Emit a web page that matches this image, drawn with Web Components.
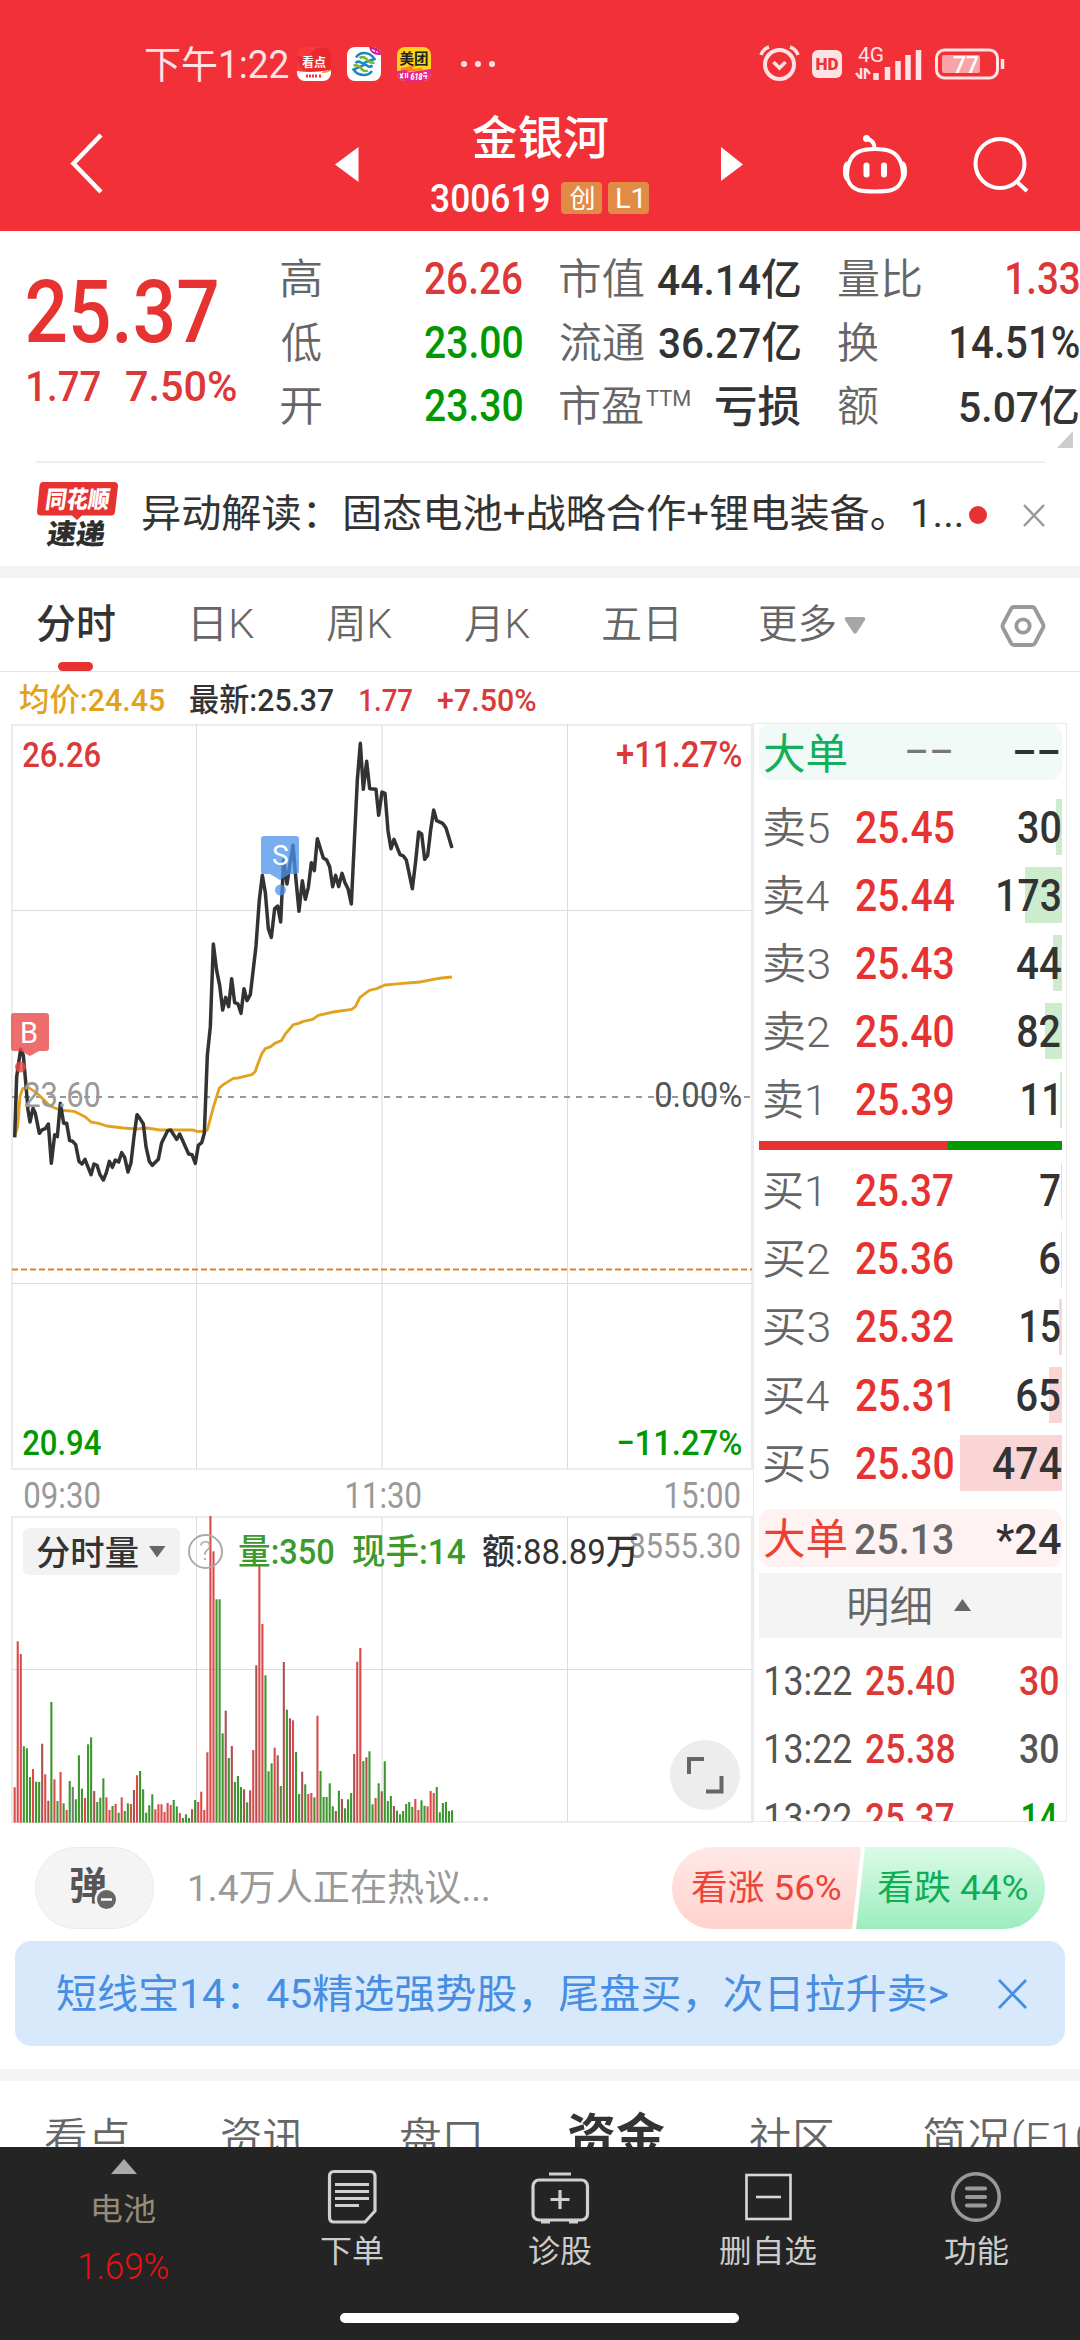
<!DOCTYPE html>
<html lang="zh-CN">
<head>
<meta charset="utf-8">
<title>金银河 300619</title>
<style>
html,body{margin:0;padding:0;width:1080px;height:2340px;overflow:hidden;background:#fff}
body{font-family:Roboto,"Noto Sans CJK SC",sans-serif;color:#333}
</style>
</head>
<body>
<stock-page></stock-page>
<script>
const FAMILY = 'Roboto, "Noto Sans CJK SC", sans-serif';
const pen = document.createElement('canvas').getContext('2d');

/* A single line of text whose ink is fitted to the width given in w. */
class UiText extends HTMLElement {
  connectedCallback() {
    const s = +this.getAttribute('size'), wt = this.getAttribute('weight') || 400;
    const text = this.getAttribute('text'), w = +this.getAttribute('w'), c = this.getAttribute('color') || 'inherit';
    pen.font = `${wt} ${s}px ${FAMILY}`;
    const m = pen.measureText(text), l = -m.actualBoundingBoxLeft, r = m.actualBoundingBoxRight;
    const k = w / (r - l);
    const lh = Math.round(s * 1.3), pull = (s - lh) / 2;
    this.attachShadow({mode: 'open'}).innerHTML = `<style>
      :host{display:block;flex:none;width:${w}px;height:${s}px}
      span{display:inline-block;vertical-align:top;margin-top:${pull}px;white-space:pre;font:${wt} ${s}px/${lh}px ${FAMILY};color:${c};
        transform-origin:0 50%;transform:translate(${-l * k}px,1.4px) scaleX(${k})}
    </style><span></span>`;
    this.shadowRoot.querySelector('span').textContent = text;
  }
}
customElements.define('ui-text', UiText);

const T = (text, w, size, color = '#333', weight = 400, ml = 0, dy = 0) =>
  `<ui-text text="${text}" w="${w}" size="${size}" color="${color}" weight="${weight}" style="margin-left:${ml}px;margin-top:${dy}px"></ui-text>`;
/* items: [left, width, text, size, color, weight]; laid out left to right in a flex row */
const run = (items, from = 0) => {
  let at = from;
  return items.map(([x, w, t, s, c, wt, dy]) => { const h = T(t, w, s, c, wt, x - at, dy); at = x + w; return h; }).join('');
};
const define = (name, css, html) => customElements.define(name, class extends HTMLElement {
  connectedCallback() {
    this.attachShadow({mode: 'open'}).innerHTML = `<style>:host{display:block}*{box-sizing:border-box}svg{display:block;flex:none;overflow:visible}.r{display:flex;align-items:center}${css}</style>${typeof html === 'function' ? html(this) : html}`;
  }
});

define('status-bar', `:host{height:128px;padding-left:146px;color:#fff}.r{height:128px}`, `<div class="r">
  ${T('下午1:22', 142, 38, '#fde3e4', 400)}
  <svg width="200" height="34" viewBox="297 47 200 34" style="margin-left:9px">
    <defs><clipPath id="a"><rect x="297" y="47" width="34" height="34" rx="8"/></clipPath><clipPath id="b"><rect x="347" y="47" width="34" height="34" rx="8"/></clipPath><clipPath id="c"><rect x="397" y="47" width="34" height="34" rx="8"/></clipPath></defs>
    <g clip-path="url(#a)"><rect x="297" y="47" width="34" height="34" fill="#f8383a"/><path d="M297 55Q306 62 316 48L331 47V72H310Q297 68 297 55Z" fill="#e9292d"/><path d="M297 71Q310 73.500 331 70V81H297Z" fill="#fff"/><path d="M322 72.500Q328 72 331 70" stroke="#f7a23b" stroke-width="1.500"/><path d="M306 76h12M319 76h3" stroke="#e33" stroke-width="2.800" stroke-dasharray="2 1"/></g>
    <text x="302" y="66.500" font-size="12" font-weight="700" fill="#fff" textLength="24" font-family='"Noto Sans CJK SC"'>看点</text>
    <g clip-path="url(#b)"><rect x="347" y="47" width="34" height="34" fill="#fff"/><path d="M369 47h12v8q-10 1-12-8z" fill="#c9208f"/><path d="M372 49.500l3 2M376 51.500l2 1" stroke="#fff" stroke-width="1.200"/>
      <g fill="none" stroke-width="2.500"><path d="M356 57.500Q359 53 364 53Q371 53 374.500 59L366 62Q363 64 361 62.500Q358 60.500 355.500 63" stroke="#1d86c6"/><path d="M372 71Q369 75 364 75Q357 75 353.500 69.500L362 66Q365 64 367 65.500Q370 68 372.500 65.500" stroke="#1d86c6"/><path d="M353.500 65.500Q358 64 362 69.500Q365 72 368 70.500" stroke="#79b82a"/><path d="M374.500 62.500Q370 64 366 58.500Q363 56 359.500 58" stroke="#79b82a"/></g></g>
    <g clip-path="url(#c)"><rect x="397" y="47" width="34" height="34" fill="#ffd51c"/><path d="M397 71L411 69L407 72.500L431 69V81H397Z" fill="#e8288c"/><path d="M401 69.500L413 66.500L409 70.500L422 69" stroke="#ff7d1a" stroke-width="2" fill="none"/><path d="M400 73.500l3 5M403 73l-3 5.500M405.500 73v5M407.500 73v5M423.500 73h3.500M423 76h4.500M426 76v3" stroke="#fff" stroke-width="1.300"/></g>
    <text x="399.500" y="64" font-size="14.500" font-weight="700" fill="#222" textLength="29" font-family='"Noto Sans CJK SC"'>美团</text>
    <text x="410.500" y="80" font-size="9" font-weight="900" font-style="italic" fill="#fff" textLength="12" lengthAdjust="spacingAndGlyphs" font-family="Roboto">618</text>
    <g fill="#fde3e4"><circle cx="464" cy="64" r="3"/><circle cx="478" cy="64" r="3"/><circle cx="492" cy="64" r="3"/></g>
  </svg>
  <svg width="250" height="40" viewBox="758 44 250 40" style="margin-left:261px" fill="none" stroke="#fde3e4">
    <circle cx="779.500" cy="64.500" r="14.500" stroke-width="4"/><path d="M773.500 62l6 6 6-6" stroke-width="3.500"/><path d="M761 55q2-6 8-8M798 55q-2-6-8-8" stroke-width="3.500"/>
    <rect x="812" y="50" width="30" height="28" rx="6" fill="#fde3e4" stroke="none"/><text x="815.500" y="70" font-size="16" font-weight="900" textLength="23" lengthAdjust="spacingAndGlyphs" font-family="Roboto" fill="#f13038" stroke="none">HD</text>
    <text x="858" y="62" font-size="20" textLength="26" lengthAdjust="spacingAndGlyphs" font-family="Roboto" fill="#fde3e4" stroke="none">4G</text>
    <path d="M861 68v11M856 73l4 5M865 79v-11M870 74l-4-5" stroke-width="2.500"/>
    <path d="M876 73v7M887.500 67v13M898 61v19M908 55v25M918.500 50v30" stroke-width="5.500"/>
    <rect x="936.500" y="50" width="61" height="28" rx="8" stroke-width="3"/><path d="M1002.500 59v10" stroke-width="3.500"/>
    <rect x="942" y="55" width="38" height="18" rx="2" fill="#f9a3a6" stroke="none"/><text x="953" y="73" font-size="24" font-weight="500" textLength="26" lengthAdjust="spacingAndGlyphs" font-family="Roboto" fill="#fff" stroke="none">77</text>
  </svg></div>`);

define('title-bar', `:host{height:103px;display:flex;align-items:flex-start;color:#fff}
.mid{width:250px;display:flex;flex-direction:column;align-items:center}
.code{display:flex;align-items:center;height:32px}
.b{width:41px;height:32px;background:#e28b47;border-radius:4px;display:flex;align-items:center;justify-content:center}`, `
  <svg width="360" height="80" viewBox="0 128 360 80"><path d="M101 135L73.500 163.500L101 192" fill="none" stroke="#fff" stroke-width="4.500"/><path d="M335 164.500L358.500 147V182Z" fill="#fff"/></svg>
  <div class="mid" style="margin-left:55px">
    ${T('金银河', 135, 46, '#fff', 500, 0, -14)}
    <div class="code" style="margin-top:22px">${T('300619', 118, 38, '#fff', 500)}<div class="b" style="margin-left:12px">${T('创', 24, 26, '#fff')}</div><div class="b" style="margin-left:6px">${T('L1', 24, 28, '#fff')}</div></div>
  </div>
  <svg width="360" height="80" viewBox="720 128 360 80" style="margin-left:55px" fill="none" stroke="#fff" stroke-width="4"><path d="M721 147V181L743 164.500Z" fill="#fff" stroke="none"/>
    <path d="M875 149c14 0 22 3 26 14 5 16-1 24-9 27-8 2-26 2-34 0-8-3-14-11-9-27 4-11 12-14 26-14z"/><path d="M848 163q-3 1-3 8t3 9M902 163q3 1 3 8t-3 9"/><path d="M874.500 148q0-7-7-9" /><circle cx="866.500" cy="138.500" r="3.500" fill="#fff" stroke="none"/><path d="M866.500 165.500v9M884 165.500v9" stroke-width="6" stroke-linecap="round"/>
    <circle cx="1000" cy="163.500" r="24.500"/><path d="M1017 182l10 9"/></svg>`);

define('quote-panel', `:host{height:230px;display:flex;overflow:hidden}.left{width:281px;padding-top:43px}.g{width:799px;padding-top:16px}.g .r{height:63.500px}`, `
  <div class="left"><div class="r" style="height:74px">${T('25.37', 190, 88, '#e63231', 500, 27)}</div><div class="r" style="height:74px">${run([[28, 72, '1.77', 43, '#dc3838', 500], [126, 110, '7.50%', 43, '#dc3838', 500]])}</div></div>
  <div class="g">
    <div class="r">${run([[281,40,'高',42,'#666',350],[425,97,'26.26',44,'#dc3838',500],[560,84,'市值',42,'#666',350],[658,142,'44.14亿',43,'#333',500],[838,83,'量比',42,'#666',350],[1007,72,'1.33',44,'#dc3838',500]],281)}</div>
    <div class="r">${run([[281,40,'低',42,'#666',350],[425,97,'23.00',44,'#009900',500],[560,84,'流通',42,'#666',350],[659,141,'36.27亿',43,'#333',500],[838,40,'换',42,'#666',350],[951,128,'14.51%',44,'#333',500]],281)}</div>
    <div class="r">${run([[281,40,'开',42,'#666',350],[425,97,'23.30',44,'#009900',500],[560,83,'市盈',42,'#666',350],[646,44,'TTM',22,'#666',400,-16],[716,84,'亏损',43,'#333',500],[838,40,'额',42,'#666',350],[960,118,'5.07亿',43,'#333',500]],281)}</div>
    <svg width="16" height="17" style="margin:-7px 0 0 776px"><path d="M16 0V17H0Z" fill="#ccc"/></svg>
  </div>`);

define('news-strip', `:host{height:105px;margin:0 35px 0 36px;border-top:2px solid #eee;display:flex;align-items:center}`, `
  <svg width="84" height="70" viewBox="35 478 84 70"><path d="M42 480H113Q117 480 117 484L114 510Q113.500 513.500 110 513.500H81L76 518L71 513.500H40Q36 513.500 36 510L38.500 484Q39 480 42 480Z" fill="#e63231"/>
  <g font-family='"Noto Sans CJK SC"' font-weight="900"><text transform="translate(43.500 506) skewX(-8)" font-size="24" fill="#fff" textLength="64" lengthAdjust="spacingAndGlyphs">同花顺</text><text transform="translate(45 542) skewX(-8)" font-size="28" fill="#2e2e2e" textLength="58" lengthAdjust="spacingAndGlyphs">速递</text></g></svg>
  ${T('异动解读：固态电池+战略合作+锂电装备。1...', 819, 39, '#333', 400, 23, -2)}
  <svg width="80" height="30" viewBox="967 498 80 30" style="margin-left:5px"><circle cx="978" cy="513" r="9" fill="#e63231"/><path d="M1024 503L1044 524M1044 503L1024 524" stroke="#999" stroke-width="2.500"/></svg>`);

define('period-tabs', `:host{height:94px;border-bottom:1px solid #e4e4e4}.r{height:92px}.i{width:35px;height:9px;border-radius:5px;background:#e63231;margin:-8px 0 0 58px}`, `
  <div class="r">${run([[37,78,'分时',40,'#333',500],[194,60,'日K',40,'#666',350],[327,65,'周K',40,'#666',350],[465,65,'月K',40,'#666',350],[603,74,'五日',40,'#666',350],[759,76,'更多',40,'#666',350]])}
  <svg width="205" height="50" viewBox="843 599 205 50" style="margin-left:8px;margin-top:1px"><path d="M846 616H864Q866 617 865 619L856.500 632Q855 633.500 853.500 632L845 619Q844 617 846 616Z" fill="#a6a6a6"/><g fill="none" stroke="#999" stroke-width="3.800"><path d="M1014 606H1032Q1034 606 1035 608L1043 623Q1044 625 1043 627L1035 642Q1034 644 1032 644H1014Q1012 644 1011 642L1003 627Q1002 625 1003 623L1011 608Q1012 606 1014 606Z" stroke-linejoin="round"/><circle cx="1023" cy="625" r="6.700"/></g></svg></div><div class="i"></div>`);

define('chart-legend', `:host{height:51px}.r{height:54px}`, `<div class="r">${run([[20,144,'均价:24.45',32,'#e2a21c',500],[190,143,'最新:25.37',32,'#333',500],[360,52,'1.77',32,'#d93a3a',500],[438,98,'+7.50%',32,'#d93a3a',500]])}</div>`);

/* Price polyline, average polyline and volume bars, in thirds of a pixel. */
const PRICE = '44,1312 50,1130 62,1048 70,1066 80,1180 84,1230 90,1266 99,1225 106,1240 118,1300 126,1290 136,1286 145,1272 154,1390 164,1304 172,1310 181,1210 191,1270 200,1270 209,1322 218,1324 227,1334 237,1384 246,1392 255,1378 273,1424 282,1392 291,1396 300,1424 310,1440 319,1418 328,1384 337,1402 346,1380 356,1386 365,1358 374,1372 384,1416 393,1388 402,1310 411,1244 420,1256 430,1272 438,1340 448,1384 457,1396 475,1378 485,1328 503,1292 512,1290 530,1318 539,1302 566,1362 576,1364 586,1390 595,1336 605,1328 613,1300 622,1066 631,980 640,732 650,812 659,856 668,930 677,892 686,920 695,836 704,908 714,912 723,940 732,866 741,902 751,884 768,738 778,600 787,526 796,578 805,686 814,712 824,626 833,618 842,666 851,480 861,552 870,490 879,436 888,540 897,634 907,542 916,598 925,562 934,488 943,512 952,416 970,474 980,480 989,500 998,560 1007,526 1016,560 1026,520 1035,548 1044,566 1054,612 1072,240 1081,130 1090,268 1100,184 1109,266 1128,268 1136,346 1146,276 1155,280 1164,392 1173,446 1182,418 1200,464 1210,468 1219,480 1237,566 1247,484 1256,396 1265,402 1274,478 1283,466 1292,390 1301,330 1310,362 1328,370 1338,384 1356,444';
const AVG = '44,1310 53,1280 60,1190 68,1166 84,1162 100,1172 120,1188 150,1218 180,1230 222,1234 255,1250 273,1266 296,1270 320,1278 370,1284 410,1287 440,1284 480,1290 580,1290 590,1294 615,1294 622,1290 640,1222 658,1164 670,1154 700,1135 715,1134 755,1124 765,1116 776,1085 786,1060 796,1046 812,1040 824,1030 844,1022 856,1002 880,974 896,970 910,964 938,958 955,946 1000,936 1055,928 1066,920 1080,892 1108,871 1130,866 1155,855 1200,851 1260,846 1300,838 1325,834 1356,831';
const VOL = '1012r 574r 612r 889g 895g 981g 957r 995g 996g 881d 973r 1052d 756g 988r 1053g 966r 1060g 1080r 993g 1011k 1048g 916g 1016g 1044r 883g 862g 1023d 1056g 1043g 985g 1042r 1080r 1068g 1062r 1088g 1042r 1083g 1060g 1062r 1020d 976r 963g 1018g 1088g 1066g 1033g 1078r 1063r 1063r 1086r 1059r 1065r 1050g 1069g 1089r 1104g 1093g 1104g 1078d 1050g 1056r 1025r 1080r 907r 198r 304r 448g 448g 850g 782d 924g 888d 996g 978g 1011g 1018d 1057g 1021d 900r 646d 346r 522r 676g 964g 940g 893r 916d 1008g 636d 779g 805d 811r 906g 1032g 965d 1003g 1032r 1029r 1042g 797r 963g 1041g 1041g 1000g 1069g 1083d 1022g 1047d 1075g 1048g 1029g 912d 635r 594r 933g 922d 904g 1063g 1044r 1000g 1024d 934g 1053g 1038g 1068d 1082g 1093g 1083g 1062g 1056g 1071g 1047r 1080r 1051g 1067g 1069r 1023r 1029r 1011g 1087g 1059g 1056g 1083g 1081g'.split(' ');
const INK = {r: '#dc4a4a', g: '#3f9630', d: '#a85252', k: '#777'};
const bars = VOL.map((v, i) => { const t = parseInt(v), x = (44 + i * 9.176) / 3; return `<rect x="${(x - 1.05).toFixed(2)}" y="${(1450 + t / 3).toFixed(1)}" width="2.1" height="${((1118 - t) / 3).toFixed(1)}" fill="${INK[v.slice(-1)]}"/>`; }).join('');
/* SVG text whose ink spans x..x+w, centred on cy */
const S = (t, x, w, cy, s, c, wt = 500) => { pen.font = `${wt} ${s}px ${FAMILY}`; const m = pen.measureText(t), l = -m.actualBoundingBoxLeft, k = w / (m.actualBoundingBoxRight - l);
  return `<text transform="translate(${x - l * k} ${cy + s * .355}) scale(${k} 1)" font-size="${s}" font-weight="${wt}" fill="${c}">${t}</text>`; };

define('stock-chart', `:host{width:753px;height:1101px;flex:none}text{font-family:${FAMILY}}`, () => `<svg width="753" height="1101" viewBox="0 723 753 1101">
  <g fill="none" stroke="#ececec" stroke-width="2"><path d="M12 725H752V1469H12ZM12 1517H752V1822H12ZM382 725V1469M382 1517V1822"/></g>
  <path d="M196.500 724V1469M567.500 724V1469M12 910.500H752M12 1283.500H752M196.500 1517V1822M567.500 1517V1822M12 1669.500H752" stroke="#dcdcdc" fill="none"/>
  <path d="M12 1097H752" stroke="#999" stroke-width="2" stroke-dasharray="6 6"/><path d="M12 1269.500H752" stroke="#d98333" stroke-width="2" stroke-dasharray="6 3"/>
  <g transform="translate(0 700) scale(.33333)" fill="none" stroke-linejoin="round" ><polyline points="${AVG}" stroke="#e2a11f" stroke-width="8.500"/><polyline points="${PRICE}" stroke="#333" stroke-width="10.500"/></g>
  ${S('26.26',23,77,754,36,'#dc3838')}${S('+11.27%',617,124,754,36,'#dc3838')}${S('23.60',24,76,1094,36,'#999',450)}${S('0.00%',656,85,1094,36,'#555',450)}${S('20.94',23,78,1442,36,'#009900')}${S('−11.27%',618,123,1442,36,'#009900')}
  ${S('09:30',25,75,1495,36,'#999',450)}${S('11:30',347,74,1495,36,'#999',450)}${S('15:00',666,74,1495,36,'#999',450)}
  <g fill="#4b93ea" opacity=".75"><path d="M264 836H296Q299 836 299 839V871Q299 874 296 874H290L280 880L270 874H264Q261 874 261 871V839Q261 836 264 836Z"/><circle cx="280.500" cy="890" r="5.500"/></g>${S('S',273,15,855,28,'#fff',400)}
  <g fill="#ea4a4a" opacity=".8"><path d="M14 1013H46Q49 1013 49 1016V1048Q49 1051 46 1051H39L30 1056L21 1051H14Q11 1051 11 1048V1016Q11 1013 14 1013Z"/><circle cx="20.500" cy="1067" r="5.500"/></g>${S('B',22,15,1032.500,29,'#fff',400)}
  <rect x="23" y="1528" width="157" height="47" rx="6" fill="#f2f2f2"/>${bars}
  ${S('分时量',37,101,1552.5,34,'#333',450)}<path d="M149 1546H165.500L157 1557.500Z" fill="#666"/>
  <circle cx="205.500" cy="1551.500" r="16.500" fill="none" stroke="#aaa" stroke-width="2"/>${S('?',200,11,1551.500,25,'#aaa',300)}
  ${S('8555.30',629,111,1545.500,36,'#999',450)}${S('量:350',239,95,1552,35,'#3b9a2b')}${S('现手:14',353,113,1552,35,'#3b9a2b')}${S('额:88.89万',483,154,1552,35,'#333',450)}
  <circle cx="705" cy="1775" r="35" fill="#ededed"/><path d="M704 1759H689V1774M706 1791.500H721.500V1776" fill="none" stroke="#666" stroke-width="4"/></svg>`);

/* A trailing digit one carries side bearing, so its ink is narrower than its cell. */
const lvl = (lab, p, pw, q, qw, qr, bar, side) => { const lw = lab.endsWith('1') ? 55 : 65;
  return `<div class="l"><div class="bg" style="background:linear-gradient(${side},${side}) right/${bar}px 100% no-repeat"><div class="r lr">${T(lab, lw, 42, '#666', 350, 5)}${T(p, pw, 44, '#e63231', 500, 91 - lw + 1)}<i></i>${T(q, qw, 44, '#333', 500)}<s style="width:${qr}px"></s></div></div></div>`; };
const G = '#cdebcd', R = '#f9d5d5';
define('order-book', `:host{width:314px;height:1099px;flex:none;border:1px solid #e9e9e9;padding:0 4px 0 5px;overflow:hidden}
i{flex:1}s{flex:none}.l{height:68.150px;padding:6px 0}.bg,.lr{height:56px}
.big{height:56px;border-radius:12px;padding-right:3px}
.split{height:9px;display:flex;margin:7px 0 7px}.split b{background:#e63231;width:189px}.split u{background:#009900;flex:1}
.h{height:65px;background:#f4f4f4;margin-top:6px}.d{height:68.500px}`, `
  <div class="r big" style="background:#f1faf6">${T('大单',82,42,'#12b05c',400,5,2)}${T('––',44,42,'#777',400,61,-1)}<i></i>${T('––',44,42,'#333',500,0,-1)}</div>
  <div style="height:13px"></div>
  ${lvl('卖5','25.45',98,'30',42,2,6,G)}${lvl('卖4','25.44',98,'173',62,2,37,G)}${lvl('卖3','25.43',97,'44',44,1,9,G)}${lvl('卖2','25.40',97,'82',42,2,17,G)}${lvl('卖1','25.39',97,'11',34,6,2,G)}
  <div class="split"><b></b><u></u></div>
  ${lvl('买1','25.37',97,'7',20,2,1,R)}${lvl('买2','25.36',97,'6',20,2,1,R)}${lvl('买3','25.32',97,'15',39,2,3,R)}${lvl('买4','25.31',94,'65',43,2,13,R)}${lvl('买5','25.30',97,'474',68,1,102,R)}
  <div class="r big" style="height:58px;margin-top:12px;background:#fef3f2;padding-right:1px">${T('大单',82,42,'#ee3f33',400,5)}${T('25.13',98,43,'#666',500,9)}<i></i>${T('*24',65,43,'#333',500)}</div>
  <div class="r h">${T('明细',81,42,'#666',350,90,1)}<svg width="17" height="12" style="margin-left:24px;margin-top:-2px"><path d="M8.500 0L17 12H0Z" fill="#666"/></svg></div>
  <div style="height:8px"></div>
  <div class="r d">${run([[7,85,'13:22',40,'#555',450],[107,88,'25.40',40,'#dc3838',500],[261,38,'30',40,'#dc3838',500]])}</div>
  <div class="r d">${run([[7,85,'13:22',40,'#555',450],[107,88,'25.38',40,'#dc3838',500],[261,38,'30',40,'#555',500]])}</div>
  <div class="r d">${run([[7,85,'13:22',40,'#555',450],[107,88,'25.37',40,'#dc3838',500],[264,34,'14',40,'#009900',500]])}</div>`);

define('talk-bar', `:host{height:82px;margin-top:23px;padding:0 35px;display:flex;align-items:center}
.p{width:119px;height:82px;border-radius:41px;background:#f4f4f4;border:1px solid #ebebeb;display:flex;align-items:center;justify-content:center}
.v{width:373px;height:82px;border-radius:41px;overflow:hidden;margin-left:184px;display:flex}
.v div{height:82px;display:flex;align-items:center}.up{width:189px;background:linear-gradient(#ffe9e7,#ffd2cd);clip-path:polygon(0 0,100% 0,calc(100% - 9px) 100%,0 100%);padding-left:20px}
.dn{width:189px;margin-left:-5px;background:linear-gradient(#dafbe8,#9dedbd);clip-path:polygon(9px 0,100% 0,100% 100%,0 100%);padding-left:22px}`, `
  <div class="p"><svg width="60" height="54" viewBox="65 1860 60 54"><text x="69" y="1898" font-size="38" font-weight="700" fill="#555" font-family='"Noto Sans CJK SC"'>弹</text><circle cx="106.500" cy="1898.500" r="12" fill="#f4f4f4"/><circle cx="106.500" cy="1898.500" r="9.500" fill="#666"/><path d="M101 1898.500h11" stroke="#fff" stroke-width="2.500"/></svg></div>
  ${T('1.4万人正在热议...', 298, 37, '#999', 400, 36)}
  <div class="v"><div class="up">${T('看涨 56%', 149, 35, '#ee4438')}</div><div class="dn">${T('看跌 44%', 150, 35, '#0fae55')}</div></div>`);

define('promo-banner', `:host{height:105px;margin:12px 15px 0;border-radius:16px;background:#d9e9fc;display:flex;align-items:center;padding-left:42px}`, `
  ${T('短线宝14：45精选强势股，尾盘买，次日拉升卖&gt;', 891, 40, '#478ee2', 400, 0)}
  <svg width="30" height="30" style="margin-left:50px"><path d="M1 1L28 29M28 1L1 29" stroke="#478ee2" stroke-width="2.800"/></svg>`);

define('info-tabs', `:host{height:66px;overflow:hidden}.r{height:112px}`, `<div class="r">${run([[45,84,'看点',42,'#666',350],[222,82,'资讯',42,'#666',350],[400,79,'盘口',42,'#666',350],[568,97,'资金',49,'#333',700],[750,83,'社区',42,'#666',350],[924,187,'简况(F10)',42,'#666',350]])}</div>`);

define('nav-bar', `:host{height:193px;background:#242424;display:flex;flex-direction:column}.r{align-items:flex-start;height:166px}
.c{display:flex;flex-direction:column;align-items:center;flex:none}.home{width:399px;height:10px;border-radius:5px;background:#fff;margin-left:340px}`, `
  <div class="r">
   <div class="c" style="width:248px;padding-top:12px"><svg width="26" height="15"><path d="M13 0L26 15H0Z" fill="#aaa"/></svg>${T('电池',62,31,'#978b78',400,0,19)}${T('1.69%',88,37,'#ea1010',350,0,23)}</div>
   <div class="c" style="width:208px;padding-top:20px"><svg width="60" height="60" viewBox="322 2167 60 60" fill="none" stroke="#d0d0d0" stroke-width="3.200"><path d="M334 2171.500H370Q375 2171.500 375 2176.500V2211L365 2222H334Q329.500 2222 329.500 2217V2176.500Q329.500 2171.500 334 2171.500Z"/><path d="M335 2184.500h34M335 2191.500h34M335 2198.500h34M335 2205.500h24"/></svg>${T('下单',62,31,'#ccc',400,0,8)}</div>
   <div class="c" style="width:208px;padding-top:20px"><svg width="60" height="60" viewBox="530 2167 60 60" fill="none" stroke="#d0d0d0" stroke-width="3.200"><rect x="533" y="2180" width="54.500" height="40" rx="6"/><path d="M549 2174h22M560 2190v19M550.500 2199.500h19M541 2222h9M569 2222h9"/></svg>${T('诊股',62,31,'#ccc',400,0,8)}</div>
   <div class="c" style="width:208px;padding-top:20px"><svg width="60" height="60" viewBox="738 2167 60 60" fill="none" stroke="#d8d8d8" stroke-width="2.600"><rect x="746.500" y="2175" width="44" height="44"/><path d="M756 2197h25"/></svg>${T('删自选',96,31,'#ccc',400,0,8)}</div>
   <div class="c" style="width:208px;padding-top:20px"><svg width="60" height="60" viewBox="946 2167 60 60" fill="none" stroke="#999"><circle cx="976" cy="2197" r="23.200" stroke-width="3.600"/><path d="M967 2188.500h18M967 2197h18M967 2205.500h18" stroke-width="4.200" stroke-linecap="round"/></svg>${T('功能',63,31,'#ccc',400,0,8)}</div>
  </div><div class="home"></div>`);

define('stock-page', `:host{width:1080px;height:2340px;overflow:hidden;background:#fff}.top{background:#f13038;height:231px}.band{height:12px;background:#f4f4f4}.m{display:flex;height:1101px}`, `
  <div class="top"><status-bar></status-bar><title-bar></title-bar></div>
  <quote-panel></quote-panel><news-strip></news-strip><div class="band"></div>
  <period-tabs></period-tabs><chart-legend></chart-legend>
  <div class="m"><stock-chart></stock-chart><order-book></order-book></div>
  <talk-bar></talk-bar><promo-banner></promo-banner><div class="band" style="margin-top:23px"></div>
  <info-tabs></info-tabs><nav-bar></nav-bar>`);
</script>
</body>
</html>
